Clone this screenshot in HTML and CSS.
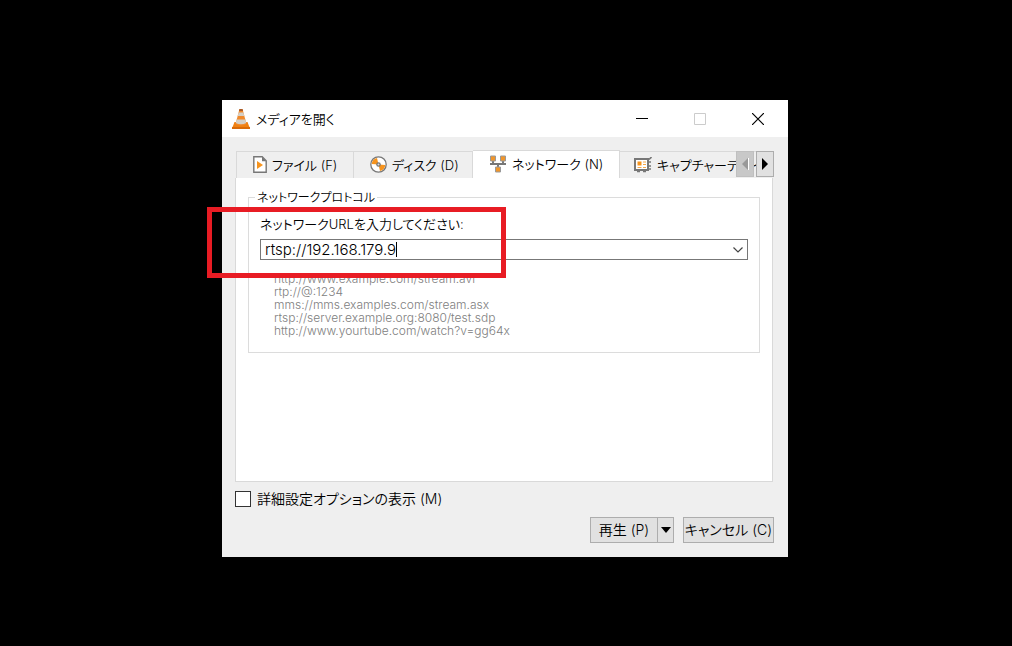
FILE: index.html
```html
<!DOCTYPE html>
<html lang="ja">
<head>
  <meta charset="UTF-8">
  <title>メディアを開く</title>
  <link rel="stylesheet" href="styles.css">
</head>
<body>

  <main class="dialog">
    <header class="titlebar">
      <svg class="cone" width="18" height="20" viewBox="0 0 18 20">
        <path d="M2.500 13h13L18 19.500H0z" fill="#f08010"/>
        <path d="M0 18h18v2H0z" fill="#d86a08"/>
        <path d="M7.500 0h3L14.500 15q-5.500 3-11 0z" fill="#f08a2c"/>
        <path d="M6.700 3.500h4.600l1 3.500H5.700z" fill="#d4d0c8"/>
        <path d="M4.700 10.500h8.600l1 3.500q-5.300 2.500-10.600 0z" fill="#d4d0c8"/>
        <path d="M7.500 0h3l.6 2H6.900z" fill="#a85a28"/>
      </svg>
      <h1 class="title">メディアを開く</h1>
      <div class="window-buttons">
        <button type="button" aria-label="最小化"><svg width="12" height="12" viewBox="0 0 12 12"><path d="M0 5.500h12" stroke="#000"/></svg></button>
        <button type="button" aria-label="最大化" disabled><svg width="12" height="12" viewBox="0 0 12 12"><path d="M.5.5h11v11H.5z" fill="none" stroke="#ccc"/></svg></button>
        <button type="button" aria-label="閉じる"><svg width="12" height="12" viewBox="0 0 12 12"><path d="M0 0l12 12M12 0L0 12" stroke="#000" stroke-width="1.200"/></svg></button>
      </div>
    </header>

    <div class="content">
      <div class="tab-area">
        <div class="tabs" role="tablist">
          <button type="button" class="tab tab-file" role="tab">
            <svg width="14" height="17" viewBox="0 0 14 17">
              <path d="M.8.8h8.400l4 4v11.400H.8z" fill="#fff" stroke="#777" stroke-width="1.400"/>
              <path d="M9 .8v4.400h4.200z" fill="#777"/>
              <path d="M4 5v8l6-4z" fill="#f7941d"/>
            </svg>
            ファイル (F)
          </button>
          <button type="button" class="tab tab-disc" role="tab">
            <svg width="17" height="17" viewBox="0 0 17 17">
              <circle cx="8.500" cy="8.500" r="7.700" fill="#fff" stroke="#777" stroke-width="1.300"/>
              <path d="M8.500 8.500L1.700 8A7 7 0 0 1 7 2zM8.500 8.500l6.800.5a7 7 0 0 1-5.300 6z" fill="#f7941d"/>
              <circle cx="8.500" cy="8.500" r="2.300" fill="#777"/>
              <circle cx="8.500" cy="8.500" r="1" fill="#ddd"/>
            </svg>
            ディスク (D)
          </button>
          <button type="button" class="tab tab-network active" role="tab" aria-selected="true">
            <svg width="18" height="18" viewBox="0 0 18 18">
              <path d="M4 6v3.500M14 6v3.500M1 9h16M9 9v3" fill="none" stroke="#777" stroke-width="2"/>
              <path d="M1.500 1h5v5h-5zM11.500 1h5v5h-5zM6.500 12h5v5h-5z" fill="#f0952a" stroke="#999"/>
            </svg>
            ネットワーク (N)
          </button>
          <button type="button" class="tab tab-capture" role="tab">
            <svg width="18" height="16" viewBox="0 0 18 16">
              <path d="M1 2h13v11H1z" fill="#fff" stroke="#777" stroke-width="2"/>
              <path d="M3 14.500h3M9 14.500h3M15 2.500L17.500 0M14 5h3M14 9h3M14 12h3" stroke="#777" stroke-width="1.600"/>
              <path d="M3.500 4.500h4v4h-4z" fill="#f7941d"/>
              <path d="M9 5h3M9 7.500h3M3.500 10.500h4M9 10.500h3" stroke="#f7a94a"/>
            </svg>
            キャプチャーデバイス (C)
          </button>
        </div>
        <div class="tab-scroll">
          <button type="button" aria-label="前のタブ" disabled><svg width="8" height="12" viewBox="0 0 8 12"><path d="M7 0v12L1 6z" fill="#999"/><path d="M7.500 0v12" stroke="#fff"/></svg></button>
          <button type="button" aria-label="次のタブ"><svg width="8" height="12" viewBox="0 0 8 12"><path d="M1 0v12l6-6z" fill="#000"/></svg></button>
        </div>
      </div>

      <section class="panel">
        <fieldset class="group">
          <legend>ネットワークプロトコル</legend>
          <label for="url">ネットワークURLを入力してください:</label>
          <div class="combo">
            <input id="url" type="text" value="rtsp://192.168.179.9">
            <span class="caret"></span>
            <button type="button" aria-label="履歴"><svg width="10" height="6" viewBox="0 0 10 6"><path d="M.5.5L5 5 9.500.5" fill="none" stroke="#444" stroke-width="1.200"/></svg></button>
          </div>
          <ul class="examples">
            <li>http://www.example.com/stream.avi</li>
            <li>rtp://@:1234</li>
            <li>mms://mms.examples.com/stream.asx</li>
            <li>rtsp://server.example.org:8080/test.sdp</li>
            <li>http://www.yourtube.com/watch?v=gg64x</li>
          </ul>
        </fieldset>
      </section>

      <label class="more"><input type="checkbox"> 詳細設定オプションの表示 (M)</label>

      <footer class="actions">
        <div class="split">
          <button type="button" class="play">再生 (P)</button>
          <button type="button" class="drop" aria-label="その他"><svg width="10" height="6" viewBox="0 0 10 6"><path d="M0 0h10L5 6z" fill="#000"/></svg></button>
        </div>
        <button type="button" class="cancel">キャンセル (C)</button>
      </footer>
    </div>

    <div class="highlight"></div>
  </main>

</body>
</html>
```
FILE: styles.css
```css
* {
  box-sizing: border-box;
}

body {
  margin: 0;
  padding: 100px 224px 89px 222px;
  background: #000;
  color: #000;
  font-family: Inter, "Noto Sans CJK JP", sans-serif;
  font-size: 14px;
  font-weight: 350;
  line-height: 20px;
  font-feature-settings: "palt";
}

button,
input {
  font: inherit;
  font-feature-settings: inherit;
  color: inherit;
  margin: 0;
  padding: 0;
  border: none;
  background: none;
}

svg {
  display: block;
  flex: none;
}

.dialog {
  position: relative;
  background: #efefef;
}

/* title bar */
.titlebar {
  display: flex;
  align-items: center;
  height: 37px;
  padding: 0 1px 0 10px;
  background: #fff;
}

.title {
  flex: 1;
  margin: 0 0 0 6px;
  font-size: 13px;
  font-weight: 350;
}

.window-buttons {
  display: flex;
}

.window-buttons button {
  display: flex;
  justify-content: center;
  align-items: center;
  width: 58px;
  height: 36px;
}

.content {
  padding: 13px 14px 14px 13px;
}

/* tabs */
.tab-area {
  position: relative;
}

.tabs {
  display: flex;
  align-items: flex-end;
  height: 28px;
  padding-left: 1px;
  overflow: hidden;
}

.tab {
  display: flex;
  flex: none;
  align-items: center;
  gap: 5px;
  height: 27px;
  padding: 0 0 1px 16px;
  border: 1px solid #d9d9d9;
  border-width: 1px 1px 0 0;
  font-size: 13px;
  white-space: nowrap;
}

.tab-file {
  width: 118px;
  border-left-width: 1px;
}

.tab-disc {
  width: 119px;
}

.tab-network {
  width: 147px;
}

.tab-capture {
  width: 200px;
  padding-left: 14px;
}

.tab.active {
  height: 28px;
  padding-bottom: 2px;
  background: #fff;
}

.tab-scroll {
  position: absolute;
  top: 1px;
  right: 0;
  display: flex;
  gap: 2px;
}

.tab-scroll button {
  display: flex;
  justify-content: center;
  align-items: center;
  width: 18px;
  height: 26px;
  border: 1px solid #adadad;
  background: #e1e1e1;
}

.tab-scroll button:disabled {
  border-color: #bfbfbf;
  background: #c8c8c8;
}

/* network panel */
.panel {
  min-height: 304px;
  margin-right: 1px;
  padding: 10px 12px;
  border: 1px solid #d9d9d9;
  border-top: none;
  background: #fff;
}

.group {
  min-width: 0;
  margin: 0;
  padding: 8px 11px 15px;
  border: 1px solid #dcdcdc;
  font-size: 13px;
}

.group legend {
  margin-left: -5px;
  padding: 2px 2px 0;
  font-size: 12px;
  line-height: 16px;
}

.group label {
  display: block;
}

.combo {
  display: flex;
  align-items: center;
  height: 21px;
  margin-top: 5px;
  padding: 0 4px;
  border: 1px solid #777;
  font-size: 15px;
}

.combo input {
  field-sizing: content;
  outline: none;
  height: 19px;
}

.caret {
  width: 1px;
  height: 15px;
  background: #000;
}

.combo button {
  margin-left: auto;
}

.examples {
  margin: 12px 0 0;
  padding: 0 0 0 14px;
  color: #808080;
  font-size: 12px;
  line-height: 13px;
  list-style: none;
}

/* bottom part */
.more {
  display: flex;
  align-items: center;
  gap: 6px;
  margin-top: 7px;
}

.more input {
  appearance: none;
  width: 16px;
  height: 16px;
  border: 1px solid #333;
  background: #fff;
}

.actions {
  display: flex;
  justify-content: flex-end;
  gap: 9px;
  margin-top: 8px;
}

.split {
  display: flex;
  border: 1px solid #adadad;
  background: #e1e1e1;
}

.play {
  width: 67px;
  border-right: 1px solid #adadad;
}

.drop {
  display: flex;
  justify-content: center;
  align-items: center;
  width: 15px;
}

.cancel {
  width: 91px;
  height: 26px;
  border: 1px solid #adadad;
  background: #e1e1e1;
}

/* red frame over the URL field */
.highlight {
  position: absolute;
  top: 107px;
  left: -15px;
  width: 299px;
  height: 71px;
  border: 5px solid #e81c24;
  pointer-events: none;
}
```
